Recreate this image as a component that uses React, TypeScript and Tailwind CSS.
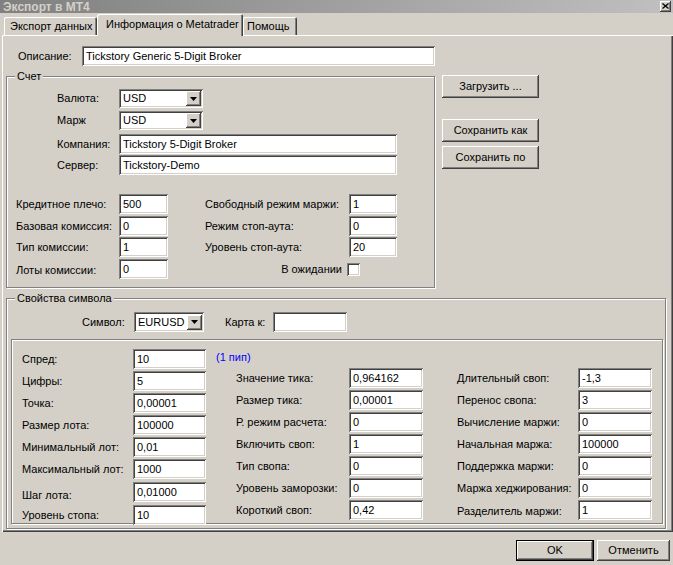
import React from 'react';

const sunken = "bg-white shadow-[inset_1px_1px_#808080,inset_-1px_-1px_#ffffff,inset_2px_2px_#404040,inset_-2px_-2px_#d4d0c8]";
const raised = "bg-[#d4d0c8] shadow-[inset_-1px_-1px_#404040,inset_1px_1px_#ffffff,inset_-2px_-2px_#808080]";
const etched = "border border-[#808080] shadow-[inset_1px_1px_#ffffff,1px_1px_#ffffff]";

function Field({ value = "", className = "" }: { value?: string; className?: string }) {
  return (
    <div className={`${sunken} shrink-0 h-[20px] pl-[4px] flex items-center whitespace-nowrap ${className}`}>
      {value}
    </div>
  );
}

function Drop({ value, className = "" }: { value: string; className?: string }) {
  return (
    <div className={`${sunken} shrink-0 h-[19px] flex items-center pl-[4px] pr-[2px] ${className}`}>
      <span className="flex-1">{value}</span>
      <span className={`${raised} w-[15px] h-[15px] flex items-center justify-center`}>
        <svg width="7" height="4" viewBox="0 0 7 4"><path d="M0 0h7L3.5 4z" fill="#000" /></svg>
      </span>
    </div>
  );
}

function Btn({ label, className = "" }: { label: string; className?: string }) {
  return (
    <div className={`${raised} h-[23px] w-[97px] flex items-center justify-center ${className}`}>
      {label}
    </div>
  );
}

function Group({ title, className = "", children }: { title: string; className?: string; children: React.ReactNode }) {
  return (
    <div className={`relative ${etched} ${className}`}>
      <span className="absolute left-[8px] top-[-8px] px-[2px] bg-[#d4d0c8] leading-[14px]">{title}</span>
      {children}
    </div>
  );
}

const acctRows = [
  { l: "Кредитное плечо:", lv: "500", r: "Свободный режим маржи:", rv: "1", mt: "" },
  { l: "Базовая комиссия:", lv: "0", r: "Режим стоп-аута:", rv: "0", mt: "mt-[2px]" },
  { l: "Тип комиссии:", lv: "1", r: "Уровень стоп-аута:", rv: "20", mt: "mt-[1px]" },
];

const leftCol = [
  ["Спред:", "10"],
  ["Цифры:", "5"],
  ["Точка:", "0,00001"],
  ["Размер лота:", "100000"],
  ["Минимальный лот:", "0,01"],
  ["Максимальный лот:", "1000"],
  ["Шаг лота:", "0,01000"],
  ["Уровень стопа:", "10"],
];

const midCol = [
  ["Значение тика:", "0,964162"],
  ["Размер тика:", "0,00001"],
  ["Р. режим расчета:", "0"],
  ["Включить своп:", "1"],
  ["Тип свопа:", "0"],
  ["Уровень заморозки:", "0"],
  ["Короткий своп:", "0,42"],
];

const rightCol = [
  ["Длительный своп:", "-1,3"],
  ["Перенос свопа:", "3"],
  ["Вычисление маржи:", "0"],
  ["Начальная маржа:", "100000"],
  ["Поддержка маржи:", "0"],
  ["Маржа хеджирования:", "0"],
  ["Разделитель маржи:", "1"],
];

export default function App() {
  return (
    <div className="w-[673px] h-[565px] overflow-hidden bg-[#d4d0c8] text-black text-[11px] leading-none font-['Liberation_Sans',Arial,sans-serif] flex flex-col select-none">
      {/* TITLE BAR */}
      <div className="h-[13px] flex items-center justify-between bg-gradient-to-r from-[#808080] to-[#c0c0c0] pl-[3px] pr-[2px]">
        <span className="font-bold text-[#d4d0c8] text-[12px]">Экспорт в MT4</span>
        <span className={`${raised} w-[11px] h-[11px] flex items-center justify-center mt-[-1px]`}>
          <svg width="7" height="6" viewBox="0 0 7 6"><path d="M0.5 0.5l6 5M6.5 0.5l-6 5" stroke="#000" strokeWidth="1.3" /></svg>
        </span>
      </div>

      {/* TABS */}
      <div className="mt-[1px] h-[21px] flex items-end pl-[4px]">
        <div className="h-[18px] w-[93px] flex items-center pl-[6px] shadow-[inset_1px_1px_#ffffff,inset_-1px_0_#404040,inset_-2px_0_#808080] rounded-t-[2px]">
          Экспорт данных
        </div>
        <div className="relative z-10 h-[22px] mb-[-1px] w-[146px] flex items-start pt-[5px] pl-[9px] bg-[#d4d0c8] shadow-[inset_1px_1px_#ffffff,inset_-1px_0_#404040,inset_-2px_0_#808080] rounded-t-[2px]">
          Информация о Metatrader
        </div>
        <div className="h-[18px] w-[54px] flex items-center pl-[4px] shadow-[inset_1px_1px_#ffffff,inset_-1px_0_#404040,inset_-2px_0_#808080] rounded-t-[2px]">
          Помощь
        </div>
      </div>

      {/* PANEL */}
      <div className="ml-[2px] h-[497px] w-[671px] flex flex-col shadow-[inset_1px_1px_#ffffff,inset_-1px_-1px_#404040,inset_-2px_-2px_#808080]">
        <div className="mt-[11px] flex items-center">
          <span className="ml-[16px] w-[64px]">Описание:</span>
          <Field value="Tickstory Generic 5-Digit Broker" className="w-[353px] h-[19px]" />
        </div>

        <div className="mt-[10px] flex items-start">
          {/* СЧЕТ */}
          <Group title="Счет" className="ml-[4px] w-[429px] h-[212px] flex flex-col">
            <div className="mt-[12px] flex items-center">
              <span className="ml-[50px] w-[62px]">Валюта:</span>
              <Drop value="USD" className="w-[84px]" />
            </div>
            <div className="mt-[3px] flex items-center">
              <span className="ml-[50px] w-[62px]">Марж</span>
              <Drop value="USD" className="w-[84px]" />
            </div>
            <div className="mt-[4px] flex items-center">
              <span className="ml-[50px] w-[62px]">Компания:</span>
              <Field value="Tickstory 5-Digit Broker" className="w-[278px]" />
            </div>
            <div className="mt-[1px] flex items-center">
              <span className="ml-[50px] w-[62px]">Сервер:</span>
              <Field value="Tickstory-Demo" className="w-[278px]" />
            </div>

            <div className="mt-[19px] flex flex-col">
              {acctRows.map((r, i) => (
                <div key={i} className={`flex items-center ${r.mt}`}>
                  <span className="ml-[9px] w-[103px] pt-[1px]">{r.l}</span>
                  <Field value={r.lv} className="w-[49px]" />
                  <span className="ml-[37px] w-[144px] pt-[1px]">{r.r}</span>
                  <Field value={r.rv} className="w-[48px]" />
                </div>
              ))}
              <div className="mt-[2px] flex items-center">
                <span className="ml-[9px] w-[103px] pt-[2px]">Лоты комиссии:</span>
                <Field value="0" className="w-[49px]" />
                <div className="ml-[37px] w-[155px] flex items-center justify-end gap-[5px]">
                  <span>В ожидании</span>
                  <span className={`${sunken} w-[13px] h-[13px]`} />
                </div>
              </div>
            </div>
          </Group>

          {/* BUTTONS */}
          <div className="ml-[7px] mt-[-1px] flex flex-col">
            <Btn label="Загрузить ..." />
            <Btn label="Сохранить как" className="mt-[21px]" />
            <Btn label="Сохранить по" className="mt-[4px]" />
          </div>
        </div>

        {/* СВОЙСТВА СИМВОЛА */}
        <Group title="Свойства символа" className="mt-[10px] ml-[4px] w-[660px] h-[231px] flex flex-col">
          <div className="mt-[13px] flex items-center">
            <span className="ml-[75px] w-[52px]">Символ:</span>
            <Drop value="EURUSD" className="w-[70px] h-[20px]" />
            <span className="ml-[21px] w-[48px]">Карта к:</span>
            <Field value="" className="w-[74px]" />
          </div>

          <div className={`mt-[7px] ml-[4px] w-[652px] h-[185px] ${etched} grid grid-cols-[214px_221px_1fr] pl-[10px] items-start`}>
            <div className="pt-[9px] flex flex-col gap-[2px]">
              {leftCol.map(([l, v], i) => (
                <div key={i} className={`flex items-center whitespace-nowrap ${i >= 6 ? "mt-[1px]" : ""}`}>
                  <span className={`w-[111px] shrink-0 ${i === 6 ? "pt-[6px]" : ""}`}>{l}</span>
                  <Field value={v} className="w-[73px] h-[19px]" />
                  {i === 0 && <span className="ml-[10px] text-[#0000ff] mt-[-3px]">(1 пип)</span>}
                </div>
              ))}
            </div>
            <div className="pt-[28px] flex flex-col gap-[2px]">
              {midCol.map(([l, v], i) => (
                <div key={i} className="flex items-center">
                  <span className="w-[113px] shrink-0">{l}</span>
                  <Field value={v} className="w-[74px] h-[19px]" />
                </div>
              ))}
            </div>
            <div className="pt-[28px] flex flex-col gap-[2px]">
              {rightCol.map(([l, v], i) => (
                <div key={i} className="flex items-center">
                  <span className={`w-[121px] shrink-0 ${i === 6 ? "pt-[2px]" : ""}`}>{l}</span>
                  <Field value={v} className="w-[74px] h-[19px]" />
                </div>
              ))}
            </div>
          </div>
        </Group>
      </div>

      {/* FOOTER */}
      <div className="mt-[8px] flex justify-end gap-[3px] pr-[3px]">
        <div className="w-[78px] h-[21px] border border-black">
          <div className={`${raised} w-full h-full flex items-center justify-center`}>OK</div>
        </div>
        <div className={`${raised} w-[73px] h-[21px] flex items-center justify-center`}>Отменить</div>
      </div>
    </div>
  );
}
